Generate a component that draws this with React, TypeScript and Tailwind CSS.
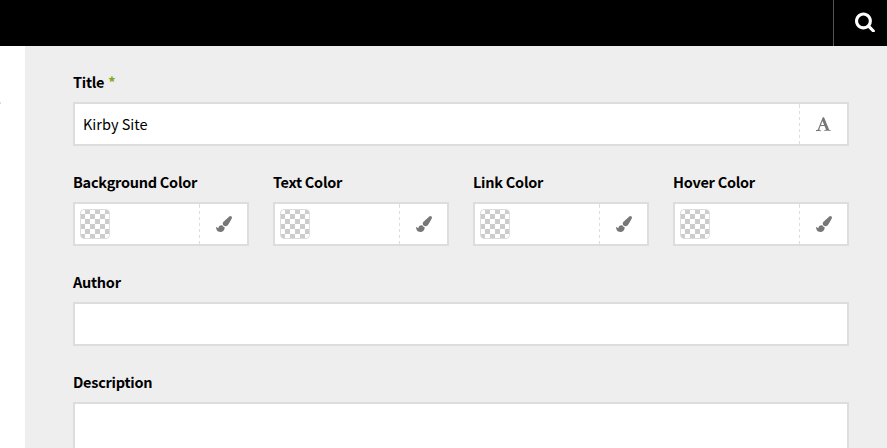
import type { ReactNode } from 'react';

function SearchIcon() {
  return (
    <svg viewBox="0 0 1792 1792" className="size-[21.5px]" fill="#fff">
      <path d="M1152 832q0-185-131.5-316.5T704 384 387.5 515.5 256 832t131.5 316.5T704 1280t316.5-131.5T1152 832zm512 832q0 52-38 90t-90 38q-54 0-90-38l-343-342q-179 124-399 124-143 0-273.5-55.5t-225-150-150-225T0 832t55.5-273.5 150-225 225-150T704 128t273.5 55.5 225 150 150 225T1408 832q0 220-124 399l343 343q37 37 37 90z" />
    </svg>
  );
}

function FontIcon() {
  return (
    <svg viewBox="0 0 1792 1792" className="size-4" fill="#777">
      <path d="M725 559l-170 450q33 0 136.500 2t160.500 2q19 0 57-2-87-253-184-452zM0 1664l2-79q23-7 56-12.500t57-10.500 49.500-14.500 44.500-29 31-50.500l237-616 280-724h128q8 14 11 21l205 480q33 78 106 257.500t114 274.500q15 34 58 144.500t72 168.500q20 45 35 57 19 15 88 29.500t84 20.500q6 38 6 57 0 5-.5 13.500t-.5 12.500q-63 0-190-8t-191-8q-76 0-215 7t-178 8q0-43 4-78l131-28q1 0 12.500-2.500t15.500-3.500 14.500-4.500 15-6.500 11-8 9-11 2.500-14q0-16-31-96.500t-72-177.500-42-100l-450-2q-26 58-76.500 195.500T382 1526q0 22 14 37.500t43.500 24.500 48.500 13.500 57 8.500 41 4q1 19 1 58 0 9-2 27-58 0-174.500-10T236 1679q-8 0-26.500 4t-21.500 4q-80 14-188 14v-37z" />
    </svg>
  );
}

function BrushIcon() {
  return (
    <svg viewBox="0 0 1792 1792" className="size-4" fill="#777">
      <path d="M1615 0q70 0 122.500 46.500T1790 163q0 63-45 151-332 629-465 752-97 91-218 91-126 0-216.500-92.500T755 845q0-128 92-212l638-579q59-54 130-54zM706 1034q39 76 106.500 130t150.500 76l1 71q4 213-129.500 347T487 1792q-123 0-218-46.500T116.500 1618 30 1434.500 0 1215q7 5 41 30t62 44.500 59 36.500 46 17q41 0 55-37 25-66 57.500-112.500t69.500-76 88-47.500 103-25.500 125-10.500z" />
    </svg>
  );
}

function Field({ label, required, children }: { label: string; required?: boolean; children: ReactNode }) {
  return (
    <div className="flex min-w-0 flex-col">
      <div className="h-8 text-[14.5px] leading-6 font-bold tracking-[-0.26px] whitespace-nowrap">
        {label}
        {required && <span className="ml-px text-[#84a81c]"> *</span>}
      </div>
      {children}
    </div>
  );
}

function Box({ children, icon }: { children?: ReactNode; icon?: ReactNode }) {
  return (
    <div className="flex h-11 border-2 border-[#ddd] bg-white">
      <div className="flex min-w-0 flex-1 items-center">{children}</div>
      {icon && (
        <>
          <div className="w-px border-t border-[#ddd] bg-[repeating-linear-gradient(#ddd_0_3px,#fff_3px_6px)]" />
          <div className="flex w-[47px] items-center pl-[15.5px]">{icon}</div>
        </>
      )}
    </div>
  );
}

const colors = ['Background Color', 'Text Color', 'Link Color', 'Hover Color'];

export default function App() {
  return (
    <div className="flex h-[448px] w-[887px] flex-col overflow-hidden bg-white font-['Noto_Sans_CJK_SC',sans-serif] text-black">
      <header className="flex h-[46px] shrink-0 justify-end bg-black">
        <div className="w-[54px] border-l border-[#555] pt-[10.8px] pl-[21.3px]">
          <SearchIcon />
        </div>
      </header>
      <div className="flex min-h-0 flex-1">
        <aside className="w-[25px] shrink-0 pt-14">
          <div className="h-0.5 w-px bg-[#ddd]" />
        </aside>
        <main className="flex flex-1 flex-col gap-6 bg-[#eee] pt-6 pr-[38px] pl-12">
          <Field label="Title" required>
            <Box icon={<FontIcon />}>
              <span className="pl-2 text-[14.5px] leading-6">Kirby Site</span>
            </Box>
          </Field>
          <div className="grid grid-cols-4 gap-6">
            {colors.map((label) => (
              <Field key={label} label={label}>
                <Box icon={<BrushIcon />}>
                  <span className="mb-px ml-[5px] size-[30px] rounded-[4px] border border-[#ddd] bg-[repeating-conic-gradient(#ccc_0_25%,#fff_0_50%)] bg-[length:10px_10px] bg-origin-border" />
                </Box>
              </Field>
            ))}
          </div>
          <Field label="Author">
            <Box />
          </Field>
          <Field label="Description">
            <div className="h-24 border-2 border-[#ddd] bg-white" />
          </Field>
        </main>
      </div>
    </div>
  );
}
